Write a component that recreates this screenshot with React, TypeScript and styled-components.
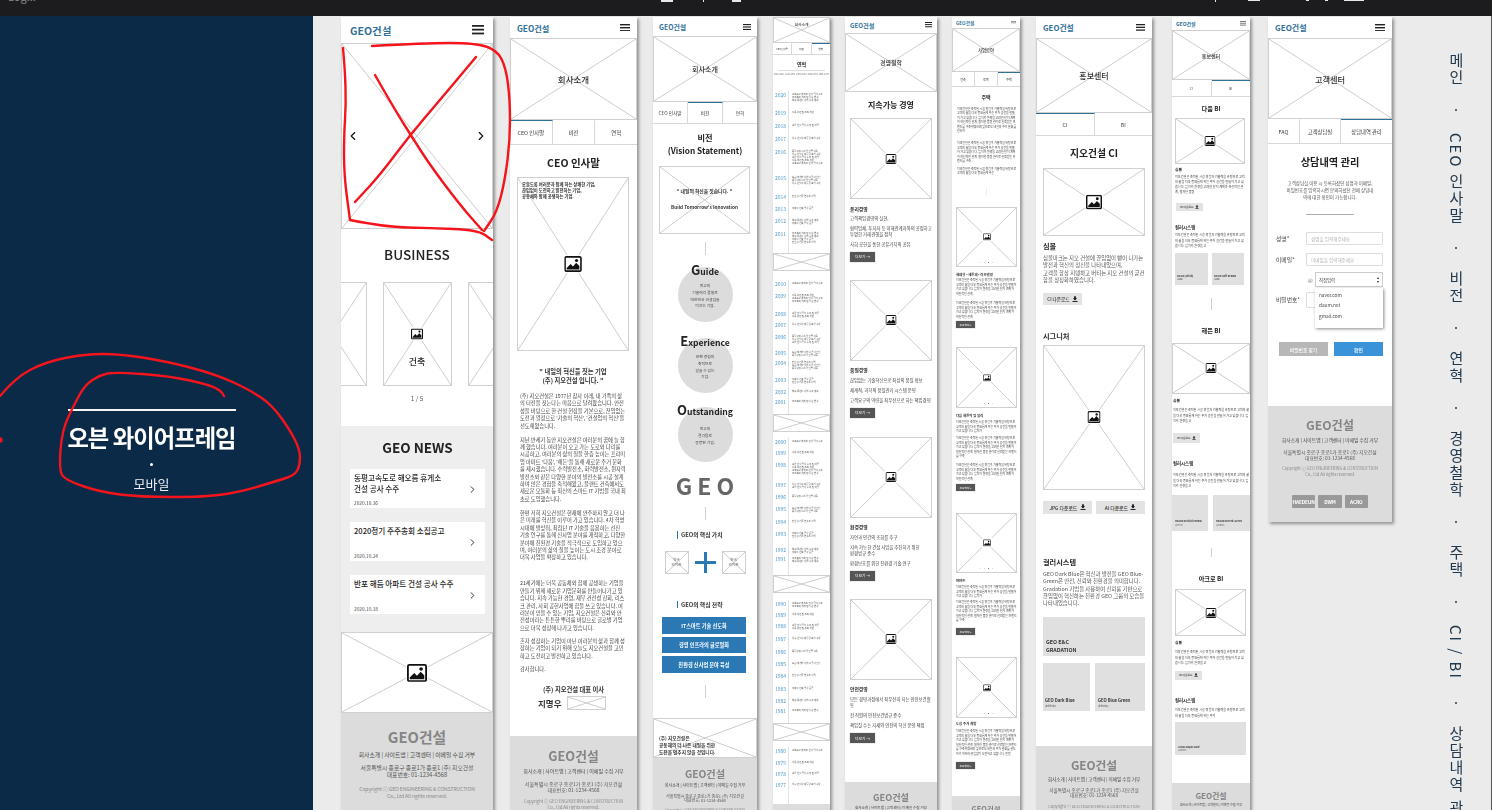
import React from "react";
import styled, { createGlobalStyle } from "styled-components";
import { ChevronLeft, ChevronRight } from "lucide-react";

const FONT = '"Noto Sans CJK KR","Noto Sans",sans-serif';

const Global = createGlobalStyle`
  html,body{margin:0;padding:0;height:810px;overflow:hidden;background:#ebebeb;}
  body{font-family:${FONT};}
  *{box-sizing:border-box;}
`;

const Page = styled.div`width:1492px;height:810px;position:relative;display:flex;flex-direction:column;overflow:hidden;`;
const TopBar = styled.header`flex:none;height:16px;background:#1c1c1e;display:flex;align-items:flex-start;overflow:hidden;`;
const TopText = styled.span<{ $ml: number }>`margin:-10px 0 0 ${p => p.$ml}px;font-size:11px;line-height:13px;color:#888;`;
const TopBit = styled.i<{ $ml: number; $w: number; $h?: number }>`flex:none;display:block;margin-left:${p => p.$ml}px;width:${p => p.$w}px;height:${p => p.$h ?? 2}px;background:#e8e8e8;`;
const Main = styled.main`flex:1;min-height:0;display:flex;`;
const Cover = styled.aside`flex:none;width:313px;background:#0a2a47;display:flex;flex-direction:column;align-items:center;padding:393px 10px 0 0;color:#fff;filter:blur(.25px);`;
const CoverRule = styled.div`width:168px;height:2px;background:#f4f4f4;`;
const CoverTitle = styled.h1`margin:9px 0 0;font-size:23.3px;line-height:34px;font-weight:600;letter-spacing:-0.95px;white-space:nowrap;`;
const CoverDot = styled.div`margin-top:9px;width:3px;height:3px;border-radius:50%;background:#fff;`;
const CoverSub = styled.div`margin-top:8px;font-size:13px;line-height:20px;color:#eef1f4;`;

const Stage = styled.div`flex:1;min-width:0;height:794px;display:flex;align-items:flex-start;padding:1px 0 0 28px;background:#ebebeb;overflow:hidden;border-right:1px solid #555;`;
const Phone = styled.section<{ $w: number; $gap: number; $auto?: boolean }>`
  flex:none;width:${p => p.$w}px;margin-right:${p => p.$gap}px;min-height:${p => (p.$auto ? 0 : 794)}px;
  display:flex;flex-direction:column;background:#fff;box-shadow:2px 2px 3px rgba(0,0,0,.38);filter:blur(.42px);color:#2a2a2a;
`;
const Header = styled.div<{ $h: number; $px: number }>`flex:none;height:${p => p.$h}px;padding:0 ${p => p.$px}px;display:flex;align-items:center;justify-content:space-between;background:#fff;`;
const Logo = styled.div<{ $fs: number }>`font-size:${p => p.$fs}px;font-weight:700;color:#2f7099;white-space:nowrap;`;
const BurgerSvg = styled.svg<{ $w: number }>`width:${p => p.$w}px;height:${p => p.$w * 0.75}px;display:block;`;
const Burger = ({ w, c = "#222" }: { w: number; c?: string }) => (
  <BurgerSvg $w={w} viewBox="0 0 12 9" fill={c}><rect width="12" height="1.7" /><rect y="3.6" width="12" height="1.7" /><rect y="7.3" width="12" height="1.7" /></BurgerSvg>
);

const FrameBox = styled.div<{ $h: number; $w?: number; $mt?: number; $ml?: number }>`
  position:relative;flex:none;height:${p => p.$h}px;${p => (p.$w ? `width:${p.$w}px;` : "")}
  margin-top:${p => p.$mt ?? 0}px;margin-left:${p => p.$ml ?? 0}px;border:1px solid #d0d0d0;background:#fff;
`;
const CrossSvg = styled.svg`position:absolute;left:0;top:0;width:100%;height:100%;display:block;`;
const IconSlot = styled.div`position:absolute;left:50%;top:50%;transform:translate(-50%,-50%);background:#fff;padding:1px;display:flex;`;
const FrameContent = styled.div<{ $pt?: number; $start?: boolean }>`
  position:relative;height:100%;display:flex;flex-direction:column;
  align-items:${p => (p.$start ? "flex-start" : "center")};justify-content:${p => (p.$pt !== undefined ? "flex-start" : "center")};
  padding-top:${p => p.$pt ?? 0}px;
`;
const DotRow = styled.div`position:absolute;left:0;right:0;bottom:3px;display:flex;justify-content:center;gap:2.5px;`;
const Dot = styled.i<{ $on?: boolean }>`display:block;width:1.5px;height:1.5px;border-radius:50%;background:${p => (p.$on ? "#456" : "#ccc")};`;
const PicSvg = styled.svg`display:block;`;
const Pic = ({ w }: { w: number }) => (
  <PicSvg width={w} height={w * 0.92} viewBox="0 0 22 20">
    <rect x="1" y="1" width="20" height="18" rx="1.6" fill="#fff" stroke="#111" strokeWidth="2" />
    <path d="M3 17 L3 15 L8 10 L11 13 L15 8.5 L19 12.5 L19 17Z" fill="#111" />
    <circle cx="15.5" cy="5.6" r="2" fill="#111" />
  </PicSvg>
);
type PhProps = { h: number; w?: number; mt?: number; ml?: number; icon?: number; dots?: boolean; pt?: number; start?: boolean; children?: React.ReactNode };
const Ph = ({ h, w, mt, ml, icon, dots, pt, start, children }: PhProps) => (
  <FrameBox $h={h} $w={w} $mt={mt} $ml={ml}>
    <CrossSvg viewBox="0 0 100 100" preserveAspectRatio="none" stroke="#cdcdcd" fill="none">
      <line x1="0" y1="0" x2="100" y2="100" vectorEffect="non-scaling-stroke" />
      <line x1="100" y1="0" x2="0" y2="100" vectorEffect="non-scaling-stroke" />
    </CrossSvg>
    {icon ? <IconSlot><Pic w={icon} /></IconSlot> : null}
    {dots ? <DotRow><Dot /><Dot /><Dot $on /><Dot /></DotRow> : null}
    <FrameContent $pt={pt} $start={start}>{children}</FrameContent>
  </FrameBox>
);
const HeroLabel = styled.div<{ $fs: number }>`font-size:${p => p.$fs}px;font-weight:500;color:#333;white-space:nowrap;`;
const HeroArrows = styled.div`position:absolute;left:4px;right:4px;top:50%;transform:translateY(-50%);display:flex;justify-content:space-between;color:#111;`;

const Tabs = styled.div<{ $h: number; $fs: number }>`flex:none;height:${p => p.$h}px;display:flex;font-size:${p => p.$fs}px;border-bottom:1px solid #d8d8d8;background:#fff;`;
const Tab = styled.div<{ $on?: boolean; $w?: number; $line?: number }>`
  ${p => (p.$w ? `flex:none;width:${p.$w}px;` : "flex:1;")}display:flex;align-items:center;justify-content:center;white-space:nowrap;color:#333;
  border-right:1px solid #d8d8d8;border-top:${p => p.$line ?? 1.5}px solid ${p => (p.$on ? "#2f7099" : "transparent")};
  &:last-child{border-right:0;}
`;
const Title = styled.h2<{ $fs: number; $lh: number; $mt: number; $weight?: number }>`margin:${p => p.$mt}px 0 0;font-size:${p => p.$fs}px;line-height:${p => p.$lh}px;font-weight:${p => p.$weight ?? 600};text-align:center;color:#222;white-space:nowrap;`;
const Section = styled.div<{ $pl: number; $pr: number }>`padding:0 ${p => p.$pr}px 0 ${p => p.$pl}px;display:flex;flex-direction:column;`;
const Head = styled.h3<{ $fs: number; $lh: number; $mt: number }>`margin:${p => p.$mt}px 0 0;font-size:${p => p.$fs}px;line-height:${p => p.$lh}px;font-weight:700;color:#2a2a2a;white-space:nowrap;`;
const Body = styled.p<{ $fs: number; $lh: number; $mt: number; $lines?: number; $c?: string; $center?: boolean; $bold?: boolean }>`
  margin:${p => p.$mt}px 0 0;font-size:${p => p.$fs}px;line-height:${p => p.$lh}px;color:${p => p.$c ?? "#444"};
  ${p => (p.$lines ? `height:${p.$lines * p.$lh}px;overflow:hidden;` : "")}
  ${p => (p.$center ? "text-align:center;" : "")}${p => (p.$bold ? "font-weight:600;" : "")}
`;
const VLine = styled.div<{ $mt: number; $h: number; $c?: string }>`flex:none;align-self:center;margin-top:${p => p.$mt}px;width:1px;height:${p => p.$h}px;background:${p => p.$c ?? "#d0d0d0"};`;
const More = styled.div<{ $w: number; $h: number; $fs: number; $mt: number }>`flex:none;width:${p => p.$w}px;height:${p => p.$h}px;margin-top:${p => p.$mt}px;background:#555;color:#fff;font-size:${p => p.$fs}px;display:flex;align-items:center;justify-content:center;white-space:nowrap;box-shadow:0 0 1px #999;`;
const Download = styled.div<{ $w: number; $h: number; $fs: number; $mt?: number; $ml?: number }>`flex:none;width:${p => p.$w}px;height:${p => p.$h}px;margin:${p => p.$mt ?? 0}px 0 0 ${p => p.$ml ?? 0}px;background:#e3e3e3;color:#333;font-size:${p => p.$fs}px;font-weight:500;display:flex;align-items:center;justify-content:center;gap:.5em;white-space:nowrap;`;
const DownSvg = styled.svg<{ $s: number }>`width:${p => p.$s}px;height:${p => p.$s}px;display:block;flex:none;`;
const Down = ({ s }: { s: number }) => <DownSvg $s={s} viewBox="0 0 10 10" fill="#111"><path d="M3.6 .5h2.8v3.4h2L5 7.3 1.6 3.9h2z" /><path d="M.8 8.3h8.4v1.5H.8z" /></DownSvg>;
const Row = styled.div<{ $mt: number; $gap: number; $ml?: number }>`flex:none;display:flex;gap:${p => p.$gap}px;margin:${p => p.$mt}px 0 0 ${p => p.$ml ?? 0}px;`;
const Swatch = styled.div<{ $w?: number; $h: number; $pb?: number; $pl?: number }>`
  flex:none;${p => (p.$w ? `width:${p.$w}px;` : "")}height:${p => p.$h}px;background:#e0e0e0;display:flex;flex-direction:column;justify-content:flex-end;
  padding:0 1px ${p => p.$pb ?? 3}px ${p => p.$pl ?? 2}px;
`;
const SwatchName = styled.b<{ $fs: number; $lh?: number }>`display:block;font-size:${p => p.$fs}px;line-height:${p => p.$lh ?? p.$fs * 1.4}px;font-weight:700;color:#333;`;
const SwatchCode = styled.span<{ $fs: number }>`display:block;font-size:${p => p.$fs}px;line-height:${p => p.$fs * 2}px;color:#444;`;

const FooterBox = styled.footer<{ $u: number; $auto?: boolean; $mt?: number }>`
  ${p => (p.$auto ? "flex:none;padding-bottom:2.9em;" : "flex:1;")}margin-top:${p => p.$mt ?? 0}px;font-size:${p => p.$u}px;background:#dcdcdc;padding-top:1.9em;text-align:center;white-space:nowrap;overflow:hidden;
`;
const FooterLogo = styled.div`font-size:2.55em;line-height:1.76em;font-weight:700;color:#858585;`;
const FooterLinks = styled.div`margin-top:.1em;line-height:1.3em;color:#444;`;
const FooterAddr = styled.div`margin-top:1.25em;line-height:1.17em;color:#555;`;
const FooterCopy = styled.div`margin-top:1.35em;font-size:.88em;line-height:1.33em;color:#8a8a8a;letter-spacing:-.02em;`;
const FooterBadges = styled.div`margin-top:3.6em;display:flex;justify-content:center;gap:.6em;`;
const Badge = styled.div`width:4.9em;height:2.85em;background:#999;color:#fff;font-size:1em;font-weight:700;display:flex;align-items:center;justify-content:center;border-radius:1px;letter-spacing:-.03em;`;
const Footer = ({ u, auto, mt, badges }: { u: number; auto?: boolean; mt?: number; badges?: boolean }) => (
  <FooterBox $u={u} $auto={auto} $mt={mt}>
    <FooterLogo>GEO건설</FooterLogo>
    <FooterLinks>회사소개 | 사이트맵 | 고객센터 | 이메일 수집 거부</FooterLinks>
    <FooterAddr>서울특별시 종로구 종로1가 종로1 (주) 지오건설<br />대표번호: 01-1234-4568</FooterAddr>
    <FooterCopy>Copyright ⓒ GEO ENGINEERING &amp; CONSTRUCTION<br />Co., Ltd All rights reserved.</FooterCopy>
    {badges ? <FooterBadges><Badge>HAEDEUN</Badge><Badge>DWM</Badge><Badge>ACRO</Badge></FooterBadges> : null}
  </FooterBox>
);

/* phone 1 */
const Carousel = styled.div`margin-top:18px;display:flex;justify-content:center;gap:16px;overflow:hidden;`;
const CardLabel = styled.div`font-size:9px;line-height:12px;font-weight:500;white-space:nowrap;color:#333;`;
const Pager = styled.div`margin-top:8px;text-align:center;font-size:6.5px;line-height:8px;color:#666;`;
const NewsSection = styled.div`flex:none;height:206px;margin-top:24px;background:#eee;padding:11px 8px 0 9px;display:flex;flex-direction:column;`;
const NewsList = styled.div`margin-top:12px;display:flex;flex-direction:column;gap:14px;`;
const NewsCard = styled.article`height:39px;background:#fff;padding:3px 7px 2px 4px;display:flex;align-items:center;justify-content:space-between;color:#222;`;
const NewsText = styled.div`height:100%;display:flex;flex-direction:column;justify-content:space-between;`;
const NewsName = styled.div`font-size:7.6px;line-height:11px;font-weight:500;white-space:nowrap;`;
const NewsDate = styled.div`font-size:4.8px;line-height:7px;color:#444;`;

/* phone 2 */
const FrameNote = styled.div`padding:3px 0 0 4px;font-size:4.3px;line-height:6.2px;font-weight:600;color:#333;white-space:nowrap;`;
const SignRow = styled.div`margin-top:2px;display:flex;align-items:center;gap:6px;padding-left:28px;`;
const SignName = styled.div`font-size:8.5px;line-height:14px;font-weight:700;color:#333;`;

/* phone 3 */
const Trait = styled.div<{ $mt: number }>`flex:none;display:flex;flex-direction:column;align-items:center;margin-top:${p => p.$mt}px;`;
const TraitName = styled.div`position:relative;z-index:1;margin-top:-3px;height:12px;margin-bottom:-9px;font-size:8.6px;line-height:12px;font-weight:600;color:#222;white-space:nowrap;`;
const TraitCap = styled.span`font-size:13px;`;
const Circle = styled.div`width:55px;height:55px;border-radius:50%;background:#dcdcdc;display:flex;align-items:center;justify-content:center;padding-top:4px;text-align:center;font-size:3.8px;line-height:6.8px;color:#444;`;
const BigGeo = styled.div`margin-top:10px;text-align:center;font-size:23px;line-height:26px;font-weight:700;letter-spacing:5px;padding-left:5px;color:#666;`;
const BarHead = styled.div<{ $mt: number }>`margin-top:${p => p.$mt}px;align-self:flex-start;margin-left:24px;padding-left:3px;border-left:1.5px solid #2a79b5;font-size:5.8px;line-height:7.5px;font-weight:700;color:#333;white-space:nowrap;`;
const ValueRow = styled.div`margin-top:12px;display:flex;justify-content:center;align-items:center;`;
const ValueText = styled.div`font-size:3.6px;line-height:5px;color:#555;text-align:center;`;
const PlusSvg = styled.svg`display:block;margin:0 6px;`;
const StrategyList = styled.div`margin:9px 0 0 9px;width:84px;display:flex;flex-direction:column;gap:3px;`;
const Strategy = styled.div`height:16.5px;background:#2a79b5;color:#fff;font-size:5.2px;font-weight:700;display:flex;align-items:center;justify-content:center;white-space:nowrap;`;
const BannerText = styled.div`padding:16px 0 0 5px;font-size:4.7px;line-height:7.2px;font-weight:600;color:#333;white-space:nowrap;`;

/* phone 4 */
const MiniLine = styled.div`margin:3px 5px 0;height:1px;background:#ddd;`;
const MiniLabels = styled.div`margin-top:2px;padding:0 1px;display:flex;justify-content:space-between;font-size:2.1px;line-height:4px;color:#666;white-space:nowrap;`;
const Timeline = styled.div<{ $mt: number }>`margin-top:${p => p.$mt}px;display:flex;flex-direction:column;`;
const YearRow = styled.div<{ $h: number }>`flex:none;height:${p => p.$h}px;display:flex;overflow:hidden;`;
const Year = styled.div`flex:none;width:15px;padding:1px 0 0 2px;font-size:5px;line-height:6px;color:#4f97c9;`;
const YearBody = styled.div`flex:1;border-left:1px solid #e2e2e2;padding:2px 2px 0 3px;font-size:2.4px;line-height:3px;color:#555;`;

/* phone 9 */
const FormRow = styled.div<{ $mt: number }>`position:relative;flex:none;margin-top:${p => p.$mt}px;padding-left:8px;display:flex;align-items:center;`;
const FormLabel = styled.label`flex:none;width:30px;font-size:5.8px;line-height:8px;color:#444;white-space:nowrap;`;
const Field = styled.input<{ $h: number }>`flex:none;width:77px;height:${p => p.$h}px;padding:0 4px;border:1px solid #ddd;border-radius:1px;background:#fff;font:4.6px ${FONT};color:#666;&::placeholder{color:#b2b2b2;}`;
const AtSign = styled.span`flex:none;margin-left:32px;width:7px;font-size:5px;color:#666;`;
const SelectBox = styled.div`flex:none;width:68px;height:15px;padding:0 3px;border:1px solid #ccc;display:flex;align-items:center;justify-content:space-between;font-size:4.4px;color:#444;background:#fff;`;
const SelectArrows = styled.span`font-size:4px;line-height:3.5px;color:#222;text-align:center;`;
const Dropdown = styled.ul`position:absolute;left:47px;top:16px;z-index:2;width:68px;height:40px;margin:0;padding:2px 4px;list-style:none;background:#fff;box-shadow:1px 1px 3px rgba(0,0,0,.45);font-size:4.7px;line-height:10.4px;color:#444;`;
const FormButtons = styled.div`margin:34px 0 0 11px;display:flex;gap:6px;`;
const FormButton = styled.div<{ $blue?: boolean }>`width:49px;height:14px;background:${p => (p.$blue ? "#3a93d8" : "#b7b7b7")};color:#fff;font-size:4.8px;font-weight:500;display:flex;align-items:center;justify-content:center;`;
const Rule = styled.div`margin:13px auto 0;width:48px;height:1.5px;background:#aaa;`;

/* right-hand nav */
const SideNav = styled.nav`flex:none;margin:36px 0 0 55px;width:18px;display:flex;flex-direction:column;align-items:center;font-size:15px;color:#22384d;filter:blur(.25px);`;
const SideItem = styled.div`writing-mode:vertical-rl;text-orientation:mixed;letter-spacing:2px;line-height:18px;white-space:nowrap;`;
const SideDot = styled.div`flex:none;height:46px;display:flex;align-items:center;&::before{content:"";width:2px;height:2px;border-radius:50%;background:#22384d;}`;

const RedInk = styled.svg`position:absolute;left:0;top:0;width:1492px;height:810px;pointer-events:none;filter:blur(.35px);`;
const smooth = (pts: number[][]) => {
  let d = `M${pts[0][0]} ${pts[0][1]}`;
  for (let i = 1; i < pts.length - 1; i++) {
    const mx = (pts[i][0] + pts[i + 1][0]) / 2, my = (pts[i][1] + pts[i + 1][1]) / 2;
    d += ` Q${pts[i][0]} ${pts[i][1]} ${mx} ${my}`;
  }
  const l = pts[pts.length - 1];
  return d + ` L${l[0]} ${l[1]}`;
};
const INK = [
  [[343, 48], [345, 70], [346, 105], [344, 135], [344, 175], [350, 220]],
  [[350, 220], [385, 227], [430, 228], [478, 230], [492, 240]],
  [[372, 46], [425, 43], [475, 43], [497, 50], [506, 68], [510, 100], [510, 140], [505, 180], [497, 212], [484, 231]],
  [[476, 57], [440, 100], [410, 135], [380, 175], [355, 202]],
  [[375, 75], [395, 110], [412, 137], [430, 165], [460, 205], [482, 230]],
  [[0, 396], [15, 378], [45, 362], [85, 354], [120, 354], [165, 361], [215, 374], [250, 390], [272, 405], [290, 430], [300, 450], [300, 465], [295, 475], [280, 480], [240, 492], [205, 497], [140, 497], [100, 492], [65, 480], [59, 470], [62, 430], [75, 403], [85, 385], [100, 375], [115, 372], [170, 376], [210, 385], [221, 391], [224, 396]],
];

const POOL = ["고속도로 휴게소 건설 공사 수주", "주주총회 개최 및 정관 변경", "해외 플랜트 사업 수주 계약", "아파트 신축 공사 준공", "친환경 기술 연구소 설립", "도심 재개발 사업 시공사 선정", "품질경영 시스템 인증 획득", "우수 건설사 대통령 표창 수상", "교량 건설 공사 수주 및 착공", "사옥 이전 및 조직 개편"];
type Y = [number, number, number];
const G1: Y[] = [[2020, 18, 3], [2019, 13, 1], [2018, 13, 1], [2017, 13, 1], [2016, 26, 5], [2015, 19, 3], [2014, 12, 1], [2013, 12, 1], [2012, 13, 2], [2011, 23, 4]];
const G2: Y[] = [[2010, 12, 1], [2009, 18, 3], [2008, 11, 2], [2007, 12, 1], [2006, 16, 3], [2005, 10, 2], [2004, 17, 3], [2003, 12, 2], [2002, 10, 1], [2001, 16, 1]];
const G3: Y[] = [[2000, 11, 1], [1999, 12, 1], [1998, 20, 4], [1997, 12, 2], [1996, 12, 1], [1995, 13, 2], [1994, 12, 1], [1993, 16, 2], [1992, 9, 2], [1991, 20, 2]];
const G4: Y[] = [[1990, 11, 2], [1989, 11, 1], [1988, 13, 2], [1987, 13, 1], [1986, 12, 1], [1985, 12, 1], [1984, 13, 1], [1983, 12, 1], [1982, 10, 1], [1981, 16, 1]];
const G5: Y[] = [[1980, 12, 1], [1979, 11, 1], [1978, 11, 1], [1977, 23, 1]];
const Years = ({ data, mt }: { data: Y[]; mt: number }) => (
  <Timeline $mt={mt}>
    {data.map(([y, h, n]) => (
      <YearRow key={y} $h={h}><Year>{y}</Year><YearBody>{Array.from({ length: n }, (_, i) => <div key={i}>{POOL[(y + i) % POOL.length]}</div>)}</YearBody></YearRow>
    ))}
  </Timeline>
);

const LONG = "지오건설은 축적된 시공 경험과 기술력을 바탕으로 고객의 삶을 더욱 풍요롭게 하는 주거 공간을 만들어 가고 있습니다. 입지와 환경을 고려한 단지 계획과 혁신적인 설계, 철저한 품질 관리로 신뢰받는 브랜드를 구축하였으며 앞으로도 내일의 주거 문화를 선도하기 위하여 끊임없이 도전하고 있습니다. 친환경 기술과 스마트 시스템을 적극적으로 도입하여 입주민 모두가 안전하고 편리한 생활을 누릴 수 있도록 최선을 다하겠습니다. 고객 만족을 최우선으로 생각하며 더 나은 미래를 향해 나아가고 있습니다.";

const Para6 = ({ n, mt }: { n: number; mt: number }) => <Body $fs={2.9} $lh={4.5} $mt={mt} $lines={n}>{LONG.slice(0, n * 24 - 4)}</Body>;
const Para8 = ({ n, mt }: { n: number; mt: number }) => <Body $fs={3.1} $lh={5.3} $mt={mt} $lines={n}>{LONG.slice(0, n * 26 - 4)}</Body>;

export default function App() {
  return (
    <Page>
      <Global />
      <TopBar>
        <TopText $ml={8}>Log...</TopText>
        <TopBit $ml={625} $w={12} />
        <TopBit $ml={30} $w={1} />
        <TopBit $ml={28} $w={9} $h={2} />
        <TopBit $ml={474} $w={1} $h={2} />
        <TopBit $ml={32} $w={12} $h={1} />
        <TopBit $ml={46} $w={3} $h={1} />
        <TopBit $ml={16} $w={3} $h={1} />
        <TopBit $ml={16} $w={20} $h={1} />
      </TopBar>
      <Main>
        <Cover>
          <CoverRule />
          <CoverTitle>오븐 와이어프레임</CoverTitle>
          <CoverDot />
          <CoverSub>모바일</CoverSub>
        </Cover>
        <Stage>
          {/* 메인 */}
          <Phone $w={152} $gap={17}>
            <Header $h={26} $px={9}><Logo $fs={10.5}>GEO건설</Logo><Burger w={12.5} /></Header>
            <Ph h={186}>
              <HeroArrows><ChevronLeft size={14} strokeWidth={2} /><ChevronRight size={14} strokeWidth={2} /></HeroArrows>
            </Ph>
            <Title $fs={13.6} $lh={20} $mt={15} $weight={500}>BUSINESS</Title>
            <Carousel>
              {["주택", "건축", "토목"].map(n => (
                <Ph key={n} h={104} w={69} icon={12} pt={73}><CardLabel>{n}</CardLabel></Ph>
              ))}
            </Carousel>
            <Pager>1 / 5</Pager>
            <NewsSection>
              <Title $fs={13.5} $lh={20} $mt={0}>GEO NEWS</Title>
              <NewsList>
                <NewsCard><NewsText><NewsName>동평고속도로 해오름 휴게소<br />건설 공사 수주</NewsName><NewsDate>2020.10.16</NewsDate></NewsText><ChevronRight size={11} strokeWidth={2} /></NewsCard>
                <NewsCard><NewsText><NewsName>2020정기 주주총회 소집공고</NewsName><NewsDate>2020.10.24</NewsDate></NewsText><ChevronRight size={11} strokeWidth={2} /></NewsCard>
                <NewsCard><NewsText><NewsName>반포 해듬 아파트 건설 공사 수주</NewsName><NewsDate>2020.10.18</NewsDate></NewsText><ChevronRight size={11} strokeWidth={2} /></NewsCard>
              </NewsList>
            </NewsSection>
            <Ph h={81} icon={20} />
            <Footer u={5.8} />
          </Phone>

          {/* CEO 인사말 */}
          <Phone $w={127} $gap={16}>
            <Header $h={21} $px={7}><Logo $fs={8.2}>GEO건설</Logo><Burger w={10} /></Header>
            <Ph h={82}><HeroLabel $fs={8.5}>회사소개</HeroLabel></Ph>
            <Tabs $h={25} $fs={5.4}><Tab $on>CEO 인사말</Tab><Tab>비전</Tab><Tab>연혁</Tab></Tabs>
            <Title $fs={10.5} $lh={14} $mt={11}>CEO 인사말</Title>
            <Section $pl={7} $pr={8}>
              <Ph h={174} mt={7} icon={17.5} pt={0} start>
                <FrameNote>오늘도록 여러분과 함께 하는 상쾌한 기업,<br />끊임없이 도전하고 발전하는 기업,<br />공동체와 함께 공생하는 기업.</FrameNote>
              </Ph>
              <Body $fs={6.3} $lh={9} $mt={16} $center $bold $c="#333">" 내일의 혁신을 짓는 기업<br />(주) 지오건설 입니다. "</Body>
            </Section>
            <Section $pl={10} $pr={11}>
              <Body $fs={5.25} $lh={7.4} $mt={8}>(주) 지오건설은 1977년 창사 이래, 내 가족의 삶의 터전을 짓는다는 마음으로 달려왔습니다. 안전성을 바탕으로 한 건설 현장을 기본으로, 끊임없는 도전과 열정으로 '기술의 혁신', '건설업의 혁신'을 선도해왔습니다.</Body>
              <Body $fs={5.25} $lh={7.4} $mt={6.6}>지난 반세기 동안 지오건설은 여러분의 꿈에 늘 함께 했습니다. 여러분이 오고 가는 도로와 다리를 시공하고, 여러분의 삶의 질을 한층 높이는 프리미엄 아파트 '다움', '해든'을 통해 새로운 주거 문화를 제시했습니다. 수력발전소, 화력발전소, 원자력 발전소와 같은 다양한 분야의 발전소를 시공 설계하며 많은 경험을 축적해왔고, 플랜트 건축에서도 새로운 모듈화 등 최신의 스마트 IT 기법을 국내 최초로 도입했습니다.</Body>
              <Body $fs={5.25} $lh={7.4} $mt={6.6}>한편 저희 지오건설은 현재에 안주하지 않고 더 나은 미래를 혁신을 이루어 가고 있습니다. 4차 혁명 시대에 발맞춰, 최첨단 IT 기술을 응용하는 선진 기술 연구를 통해 신사업 분야를 개척하고, 다양한 분야에 친환경 기술을 적극적으로 도입하고 있으며, 여러분의 삶의 질을 높이는 도시 조경 분야로 더욱 사업을 확장하고 있습니다.</Body>
              <Body $fs={5.25} $lh={7.4} $mt={18.6}>21세기에는 더욱 공동체와 함께 공생하는 기업을 만들기 위해 새로운 기업문화를 만들어나가고 있습니다. 지속 가능한 경영, 재무 건전성 강화, 리스크 관리, 사회 공헌사업에 힘을 쓰고 있습니다. 여러분이 믿을 수 있는 기업, 지오건설은 신뢰와 안전성이라는 튼튼한 뿌리를 바탕으로 글로벌 기업으로 더욱 성장해 나가고 있습니다.</Body>
              <Body $fs={5.25} $lh={7.4} $mt={5.6}>혼자 성장하는 기업이 아닌 여러분의 삶과 함께 성장하는 기업이 되기 위해 오늘도 지오건설을 고민하고 도전하고 발전하고 있습니다.</Body>
              <Body $fs={5.25} $lh={7.4} $mt={5.6}>감사합니다.</Body>
            </Section>
            <Body $fs={6.3} $lh={9} $mt={12} $center $bold $c="#333">(주) 지오건설 대표 이사</Body>
            <SignRow><SignName>지명우</SignName><Ph h={14} w={39} /></SignRow>
            <Footer u={5} mt={26} />
          </Phone>

          {/* 비전 */}
          <Phone $w={104} $gap={16}>
            <Header $h={19} $px={6}><Logo $fs={6.9}>GEO건설</Logo><Burger w={8} /></Header>
            <Ph h={66}><HeroLabel $fs={7}>회사소개</HeroLabel></Ph>
            <Tabs $h={22} $fs={4.6}><Tab>CEO 인사말</Tab><Tab $on>비전</Tab><Tab>연혁</Tab></Tabs>
            <Title $fs={8.2} $lh={12.5} $mt={7}>비전<br />(Vision Statement)</Title>
            <Section $pl={6} $pr={7}>
              <Ph h={68} mt={10} pt={20}>
                <Body $fs={4.8} $lh={7} $mt={0} $center $bold $c="#333">" 내일의 혁신을 짓습니다. "</Body>
                <Body $fs={4.7} $lh={7} $mt={10} $center $bold $c="#333">Build Tomorrow's Innovation</Body>
              </Ph>
            </Section>
            <VLine $mt={8} $h={13} />
            <Trait $mt={12}>
              <TraitName><TraitCap>G</TraitCap>uide</TraitName>
              <Circle>최고의<br />기술력과 품질로<br />대한민국 건설업을<br />이끄는 기업.</Circle>
            </Trait>
            <Trait $mt={16}>
              <TraitName><TraitCap>E</TraitCap>xperience</TraitName>
              <Circle>오랜 경험의<br />축적으로<br />믿을 수 있는<br />기업.</Circle>
            </Trait>
            <Trait $mt={14}>
              <TraitName><TraitCap>O</TraitCap>utstanding</TraitName>
              <Circle>최고의<br />결과물로<br />증명된 기업.</Circle>
            </Trait>
            <BigGeo>GEO</BigGeo>
            <VLine $mt={9} $h={13} />
            <BarHead $mt={11}>GEO의 핵심 가치</BarHead>
            <ValueRow>
              <Ph h={23} w={24}><ValueText>약속<br />와이존</ValueText></Ph>
              <PlusSvg width="21" height="21" viewBox="0 0 21 21" fill="#2a79b5"><rect x="9" width="3" height="21" /><rect y="9" width="21" height="3" /></PlusSvg>
              <Ph h={23} w={24}><ValueText>한국<br />와이존</ValueText></Ph>
            </ValueRow>
            <BarHead $mt={27}>GEO의 핵심 전략</BarHead>
            <StrategyList>
              <Strategy>IT스마트 기술 선도화</Strategy>
              <Strategy>경영 인프라의 글로벌화</Strategy>
              <Strategy>친환경 신사업 분야 육성</Strategy>
            </StrategyList>
            <VLine $mt={12} $h={13} />
            <Ph h={40} mt={20} pt={0} start><BannerText>(주) 지오건설은<br />공동체의 더 나은 내일을 위한<br />도전을 멈추지 않을 것입니다.</BannerText></Ph>
            <Footer u={4} />
          </Phone>

          {/* 연혁 */}
          <Phone $w={57} $gap={15}>
            <Ph h={26} pt={4}><HeroLabel $fs={3.8}>회사소개</HeroLabel></Ph>
            <Tabs $h={12} $fs={2.5}><Tab>CEO인사말</Tab><Tab>비전</Tab><Tab $on>연혁</Tab></Tabs>
            <Title $fs={5} $lh={7} $mt={4.5}>연혁</Title>
            <MiniLine />
            <MiniLabels><span>2020~2011</span><span>2010~2001</span><span>2000~1991</span><span>1990~1981</span><span>1980~1977</span></MiniLabels>
            <Years data={G1} mt={14} />
            <Ph h={18} />
            <Years data={G2} mt={9} />
            <Ph h={18} />
            <Years data={G3} mt={6} />
            <Ph h={18} />
            <Years data={G4} mt={7} />
            <Ph h={18} />
            <Years data={G5} mt={6} />
            <Footer u={2.25} />
          </Phone>

          {/* 경영철학 */}
          <Phone $w={92} $gap={15}>
            <Header $h={16} $px={5}><Logo $fs={6.2}>GEO건설</Logo><Burger w={7} /></Header>
            <Ph h={59}><HeroLabel $fs={6}>경영철학</HeroLabel></Ph>
            <Title $fs={8} $lh={12} $mt={7}>지속가능 경영</Title>
            <Section $pl={5} $pr={5}>
              <Ph h={81} mt={7} icon={11} />
              <Head $fs={4.8} $lh={8} $mt={5.5}>윤리경영</Head>
              <Body $fs={4.4} $lh={6.5} $mt={2.7}>고객책임경영의 실현,</Body>
              <Body $fs={4.4} $lh={6.5} $mt={3.3}>협력업체, 투자자 등 이해관계자와의 공정하고<br />투명한 거래관행을 정착</Body>
              <Body $fs={4.4} $lh={6.5} $mt={2.7}>사회 공헌을 통한 공유가치의 공유</Body>
              <More $w={25} $h={10} $fs={3.8} $mt={4.7}>더보기 →</More>
              <Ph h={81} mt={18} icon={11} />
              <Head $fs={4.8} $lh={8} $mt={5.5}>품질경영</Head>
              <Body $fs={4.4} $lh={6.5} $mt={2.7}>끊임없는 기술혁신으로 최상의 품질 확보</Body>
              <Body $fs={4.4} $lh={6.5} $mt={3.3}>체계적, 과학적 품질관리 시스템 운영</Body>
              <Body $fs={4.4} $lh={6.5} $mt={3.3}>고객요구의 역량을 최우선으로 하는 책임경영</Body>
              <More $w={25} $h={10} $fs={3.8} $mt={4.7}>더보기 →</More>
              <Ph h={81} mt={19} icon={11} />
              <Head $fs={4.8} $lh={8} $mt={5.5}>환경경영</Head>
              <Body $fs={4.4} $lh={6.5} $mt={2.7}>자연과 인간의 조화를 추구</Body>
              <Body $fs={4.4} $lh={6.5} $mt={3.3}>지속 가능한 건설 사업을 추진하기 위한<br />환경법규 준수</Body>
              <Body $fs={4.4} $lh={6.5} $mt={2.7}>환경보호를 위한 친환경 기술 연구</Body>
              <More $w={25} $h={10} $fs={3.8} $mt={4.7}>더보기 →</More>
              <Ph h={81} mt={18} icon={11} />
              <Head $fs={4.8} $lh={8} $mt={5.5}>안전경영</Head>
              <Body $fs={4.4} $lh={6.5} $mt={2.7}>모든 경영과정에서 최우선이 되는 안전보건활동</Body>
              <Body $fs={4.4} $lh={6.5} $mt={3.3}>전 직원의 안전보건법규 준수</Body>
              <Body $fs={4.4} $lh={6.5} $mt={3.3}>책임질 수는 자세와 안전의 혁신 운영 책정</Body>
              <More $w={25} $h={10} $fs={3.8} $mt={4.7}>더보기 →</More>
            </Section>
            <Footer u={3.6} mt={39} />
          </Phone>

          {/* 주택 */}
          <Phone $w={68} $gap={16}>
            <Header $h={11} $px={4}><Logo $fs={4.6}>GEO건설</Logo><Burger w={5} c="#777" /></Header>
            <Ph h={44}><HeroLabel $fs={4.4}>사업분야</HeroLabel></Ph>
            <Tabs $h={15} $fs={3}><Tab>건축</Tab><Tab>토목</Tab><Tab $on>주택</Tab></Tabs>
            <Title $fs={5} $lh={7} $mt={5.5}>주택</Title>
            <Section $pl={5} $pr={3}>
              <Para6 n={6} mt={7} />
              <Para6 n={5} mt={7.5} />
              <Para6 n={2} mt={3} />
            </Section>
            <VLine $mt={11.5} $h={8} $c="#eee" />
            <Section $pl={4} $pr={3}>
              <Ph h={60} mt={12} icon={8} dots />
              <Head $fs={3.4} $lh={5} $mt={4.5}>해체형 • 해든채 • 리모델링</Head>
              <Para6 n={4} mt={1.5} />
              <Para6 n={4} mt={5} />
              <More $w={19} $h={7} $fs={2.7} $mt={2}>주요업적 &gt;</More>
              <Ph h={61} mt={19} icon={8} dots />
              <Head $fs={3.4} $lh={5} $mt={4.5}>다움 해든의 및 힐리</Head>
              <Para6 n={3} mt={2.5} />
              <Para6 n={5} mt={2.5} />
              <Para6 n={4} mt={4.5} />
              <More $w={19} $h={7} $fs={2.7} $mt={3}>주요업적 &gt;</More>
              <Ph h={60} mt={22} icon={8} dots />
              <Head $fs={3.4} $lh={5} $mt={4.5}>아파트</Head>
              <Para6 n={3} mt={2.5} />
              <Para6 n={5} mt={1.5} />
              <More $w={19} $h={7} $fs={2.7} $mt={5.5}>주요업적 &gt;</More>
              <Ph h={61} mt={22} icon={8} dots />
              <Head $fs={3.4} $lh={5} $mt={2.5}>도심 주거 개발</Head>
              <Para6 n={7} mt={3.5} />
              <More $w={19} $h={7} $fs={2.7} $mt={1.5}>주요업적 &gt;</More>
            </Section>
            <Footer u={2.9} mt={27} />
          </Phone>

          {/* CI */}
          <Phone $w={116} $gap={20}>
            <Header $h={21} $px={7}><Logo $fs={7.8}>GEO건설</Logo><Burger w={9} /></Header>
            <Ph h={75}><HeroLabel $fs={8}>홍보센터</HeroLabel></Ph>
            <Tabs $h={23} $fs={5}><Tab $on>CI</Tab><Tab>BI</Tab></Tabs>
            <Title $fs={9.8} $lh={14} $mt={10}>지오건설 CI</Title>
            <Section $pl={7} $pr={7}>
              <Ph h={68} mt={8} icon={16} />
              <Head $fs={7.2} $lh={10} $mt={5}>심볼</Head>
              <Body $fs={5.4} $lh={7.3} $mt={4} $c="#555">심볼마크는 지오 건설에 끊임없이 뻗어 나가는<br />발전과 혁신의 정신을 나타내었으며,<br />고객을 항상 지탱하고 버티는 지오 건설의 굳건<br />함을 상징화하였습니다.</Body>
              <Download $w={39} $h={12} $fs={4.6} $mt={8.5}>CI 다운로드 <Down s={6} /></Download>
              <Head $fs={7.2} $lh={10} $mt={26}>시그니처</Head>
              <Ph h={145} mt={4} icon={13} />
              <Row $mt={11} $gap={4}>
                <Download $w={49} $h={13} $fs={4.8}>JPG 다운로드 <Down s={6} /></Download>
                <Download $w={49} $h={13} $fs={4.8}>AI 다운로드 <Down s={6} /></Download>
              </Row>
              <Head $fs={7.2} $lh={10} $mt={43}>컬러시스템</Head>
              <Body $fs={5.4} $lh={7.3} $mt={4.3} $c="#555">GEO Dark Blue은 혁신과 발전을 GEO Blue-<br />Green은 안전, 신뢰와 친환경을 의미합니다.<br />Gradation 기법을 사용하여 신뢰를 기반으로<br />끊임없이 혁신하는 친환경 GEO 그룹의 모습을<br />나타내었습니다.</Body>
              <Row $mt={10} $gap={0}>
                <Swatch $w={102} $h={39} $pb={2} $pl={3}><SwatchName $fs={5.3} $lh={8}>GEO E&amp;C<br />GRADATION</SwatchName></Swatch>
              </Row>
              <Row $mt={7} $gap={5}>
                <Swatch $w={47} $h={48} $pb={3}><SwatchName $fs={4.2}>GEO Dark Blue</SwatchName><SwatchCode $fs={2.4}>(#0f2f4b7)</SwatchCode></Swatch>
                <Swatch $w={50} $h={48} $pb={3} $pl={3}><SwatchName $fs={4.2}>GEO Blue Green</SwatchName><SwatchCode $fs={2.4}>(#3f86b5)</SwatchCode></Swatch>
              </Row>
            </Section>
            <Footer u={4.6} mt={35} />
          </Phone>

          {/* BI */}
          <Phone $w={78} $gap={18}>
            <Header $h={13} $px={4}><Logo $fs={5}>GEO건설</Logo><Burger w={6} c="#666" /></Header>
            <Ph h={50}><HeroLabel $fs={5}>홍보센터</HeroLabel></Ph>
            <Tabs $h={17} $fs={3}><Tab>CI</Tab><Tab $on>BI</Tab></Tabs>
            <Title $fs={6.2} $lh={9} $mt={6.5}>다움 BI</Title>
            <Section $pl={3} $pr={5}>
              <Ph h={46} mt={5.5} icon={11} />
              <Head $fs={3.8} $lh={6} $mt={3}>심볼</Head>
              <Para8 n={4} mt={0.5} />
              <Download $w={27} $h={8} $fs={2.7} $mt={8.3} $ml={1}>BI 다운로드 <Down s={4} /></Download>
              <Head $fs={4.4} $lh={7} $mt={13.5}>컬러시스템</Head>
              <Para8 n={3} mt={1} />
              <Row $mt={4.6} $gap={4}>
                <Swatch $w={33} $h={32}><SwatchName $fs={2.6} $lh={4}>DAON (Vivid)</SwatchName><SwatchCode $fs={1.8}>(#ffffff)</SwatchCode></Swatch>
                <Swatch $w={32} $h={32}><SwatchName $fs={2.6} $lh={4}>DAON Soft Brown</SwatchName><SwatchCode $fs={1.8}>(#ffffff)</SwatchCode></Swatch>
              </Row>
            </Section>
            <VLine $mt={13} $h={12} />
            <Title $fs={6.2} $lh={9} $mt={16.5}>해든 BI</Title>
            <Ph h={51} mt={7.5} icon={11} />
            <Section $pl={1} $pr={0}>
              <Head $fs={3.8} $lh={6} $mt={4}>심볼</Head>
              <Para8 n={3} mt={3.4} />
              <Download $w={27} $h={10} $fs={2.7} $mt={9.7}>BI 다운로드 <Down s={4} /></Download>
              <Head $fs={4.4} $lh={7} $mt={17.5}>컬러시스템</Head>
              <Para8 n={3} mt={5} />
            </Section>
            <Row $mt={6.7} $gap={5}>
              <Swatch $w={36} $h={36} $pl={3}><SwatchName $fs={2.6} $lh={5.5}>HEADEN Vivid-Yellow</SwatchName><SwatchCode $fs={1.8}>(#FFFF37)</SwatchCode></Swatch>
              <Swatch $w={37} $h={36} $pl={3}><SwatchName $fs={2.6} $lh={5.5}>HEADEN Herb-Green</SwatchName><SwatchCode $fs={1.8}>(#00966D)</SwatchCode></Swatch>
            </Row>
            <VLine $mt={17} $h={9} />
            <Title $fs={6.2} $lh={9} $mt={16.5}>아크로 BI</Title>
            <Section $pl={3} $pr={4}>
              <Ph h={47} mt={6.5} icon={11} />
              <Head $fs={3.8} $lh={6} $mt={4}>심볼</Head>
              <Para8 n={3} mt={3.4} />
              <Download $w={27} $h={9} $fs={2.7} $mt={5.7}>BI 다운로드 <Down s={4} /></Download>
              <Head $fs={4.4} $lh={7} $mt={17.5}>컬러시스템</Head>
              <Para8 n={2} mt={2.9} />
              <Row $mt={4} $gap={0}>
                <Swatch $w={71} $h={33} $pb={2} $pl={3}><SwatchName $fs={2.6} $lh={4}>ACRO Royal Gold</SwatchName><SwatchCode $fs={1.8}>(#8D6B3C)</SwatchCode></Swatch>
              </Row>
            </Section>
            <Footer u={3.1} mt={28} />
          </Phone>

          {/* 상담내역 관리 */}
          <Phone $w={124} $gap={0} $auto>
            <Header $h={21} $px={7}><Logo $fs={8}>GEO건설</Logo><Burger w={10} /></Header>
            <Ph h={81}><HeroLabel $fs={8.2}>고객센터</HeroLabel></Ph>
            <Tabs $h={25} $fs={5.3}><Tab $w={32}>FAQ</Tab><Tab $w={41}>고객상담실</Tab><Tab $on>상담내역 관리</Tab></Tabs>
            <Title $fs={10.2} $lh={14} $mt={11}>상담내역 관리</Title>
            <Body $fs={4.5} $lh={7} $mt={10.5} $center $c="#555">고객상담실 이용 시 등록하셨던 성명과 이메일,<br />비밀번호를 입력하시면 문의하셨던 전체 상담내<br />역에 대한 확인이 가능합니다.</Body>
            <Rule />
            <FormRow $mt={17}><FormLabel>성명*</FormLabel><Field $h={13} placeholder="성명을 입력해주세요" /></FormRow>
            <FormRow $mt={8}><FormLabel>이메일*</FormLabel><Field $h={13} placeholder="이메일을 입력해주세요" /></FormRow>
            <FormRow $mt={6}>
              <AtSign>@</AtSign>
              <SelectBox>직접입력<SelectArrows>▴<br />▾</SelectArrows></SelectBox>
              <Dropdown><li>naver.com</li><li>daum.net</li><li>gmail.com</li></Dropdown>
            </FormRow>
            <FormRow $mt={5}><FormLabel>비밀번호*</FormLabel><Field $h={16} /></FormRow>
            <FormButtons><FormButton>비밀번호 찾기</FormButton><FormButton $blue>확인</FormButton></FormButtons>
            <Footer u={4.8} auto mt={50} badges />
          </Phone>

          <SideNav>
            <SideItem>메인</SideItem><SideDot />
            <SideItem>CEO 인사말</SideItem><SideDot />
            <SideItem>비전</SideItem><SideDot />
            <SideItem>연혁</SideItem><SideDot />
            <SideItem>경영철학</SideItem><SideDot />
            <SideItem>주택</SideItem><SideDot />
            <SideItem>CI / BI</SideItem><SideDot />
            <SideItem>상담내역 관리</SideItem>
          </SideNav>
        </Stage>
      </Main>
      <RedInk viewBox="0 0 1492 810" fill="none" stroke="#f5141c" strokeWidth="2.4" strokeLinecap="round" strokeLinejoin="round">
        {INK.map((p, i) => <path key={i} d={smooth(p)} />)}
        <circle cx="0" cy="440" r="1.5" fill="#f5141c" />
      </RedInk>
    </Page>
  );
}
